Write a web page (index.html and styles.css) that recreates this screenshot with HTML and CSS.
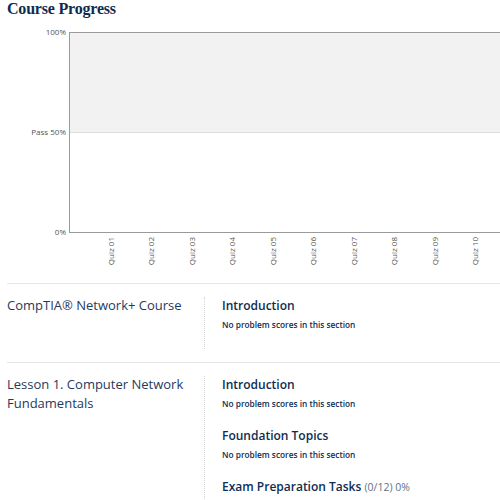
FILE: index.html
```html
<!DOCTYPE html>
<html lang="en">

<head>
    <meta charset="UTF-8">
    <meta name="viewport" content="width=device-width, initial-scale=1.0">
    <title>Course Progress</title>
    <link rel="stylesheet" href="styles.css">
</head>

<body>

    <h1 class="page-title">Course Progress</h1>

    <!-- Grade chart -->
    <div class="chart">
        <svg width="500" height="265" viewBox="0 0 500 265">
            <rect x="69.5" y="14.5" width="440" height="100" fill="#f2f2f2"/>
            <line x1="70" y1="114.5" x2="500" y2="114.5" stroke="#dedede"/>
            <rect x="69.5" y="14.5" width="440" height="200" fill="none" stroke="#9a9a9a"/>

            <g class="axis-y">
                <text x="66" y="17">100%</text>
                <text x="66" y="117">Pass 50%</text>
                <text x="66" y="217">0%</text>
            </g>

            <g class="axis-x">
                <text transform="translate(113.5 219) rotate(-90)">Quiz 01</text>
                <text transform="translate(154 219) rotate(-90)">Quiz 02</text>
                <text transform="translate(194.5 219) rotate(-90)">Quiz 03</text>
                <text transform="translate(235 219) rotate(-90)">Quiz 04</text>
                <text transform="translate(275.5 219) rotate(-90)">Quiz 05</text>
                <text transform="translate(316 219) rotate(-90)">Quiz 06</text>
                <text transform="translate(356.5 219) rotate(-90)">Quiz 07</text>
                <text transform="translate(397 219) rotate(-90)">Quiz 08</text>
                <text transform="translate(437.5 219) rotate(-90)">Quiz 09</text>
                <text transform="translate(478 219) rotate(-90)">Quiz 10</text>
            </g>
        </svg>
    </div>

    <!-- Chapters -->
    <div class="chapter">
        <div class="chapter-name">CompTIA® Network+ Course</div>
        <div class="sections">
            <div class="section">
                <h3>Introduction</h3>
                <p>No problem scores in this section</p>
            </div>
        </div>
    </div>

    <div class="chapter">
        <div class="chapter-name">Lesson 1. Computer Network Fundamentals</div>
        <div class="sections">
            <div class="section">
                <h3>Introduction</h3>
                <p>No problem scores in this section</p>
            </div>
            <div class="section">
                <h3>Foundation Topics</h3>
                <p>No problem scores in this section</p>
            </div>
            <div class="section">
                <h3>Exam Preparation Tasks <span class="score">(0/12) 0%</span></h3>
            </div>
        </div>
    </div>

</body>

</html>
```

FILE: styles.css
```css
body {
    margin: 0;
    font-family: 'Open Sans', sans-serif;
    background-color: #fff;
    color: #0d2d52;
    overflow: hidden;
}

.page-title {
    margin: 0;
    padding: 0 7px;
    font-family: 'Liberation Serif', serif;
    font-size: 16px;
    line-height: 18px;
    font-weight: bold;
    letter-spacing: -0.2px;
    color: #0c2b50;
}

.chart svg {
    display: block;
}

.chart text {
    font-family: 'Open Sans', sans-serif;
    fill: #555;
}

.axis-y text {
    font-size: 8px;
    text-anchor: end;
}

.axis-x text {
    font-size: 8px;
    text-anchor: end;
}

.chapter {
    display: flex;
    margin-left: 7px;
    padding: 13px 0 13px;
    border-top: 1px solid #e6e6e6;
}

.chapter-name {
    width: 197px;
    margin-top: -1px;
    font-size: 13px;
    line-height: 18.5px;
    color: #1f3a5d;
}

.sections {
    flex: 1;
    padding: 0 0 2px 17px;
    border-left: 1px dotted #d4d4d4;
}

.section {
    margin-bottom: 16px;
}

.section:first-child {
    margin-top: -1px;
}

.section h3 {
    margin: 0;
    font-size: 12px;
    line-height: 20px;
    font-weight: 600;
    color: #0d2d52;
}

.section p {
    margin: 2px 0 0;
    font-size: 8.3px;
    line-height: 13px;
    font-weight: 600;
    color: #0d2d52;
}

.section + .section {
    margin-top: 1px;
}

.score {
    font-size: 10.5px;
    font-weight: normal;
    color: #667080;
}
```
